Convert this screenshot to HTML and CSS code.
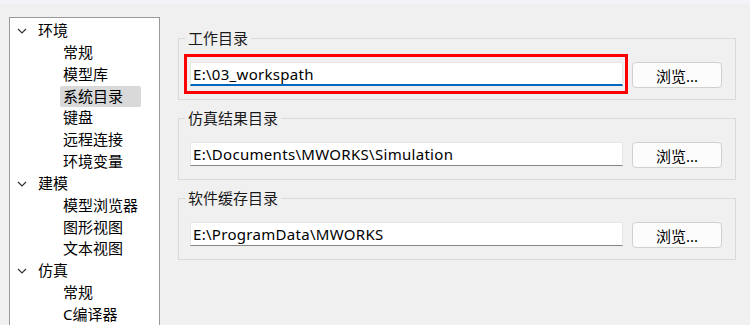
FILE: index.html
```html
<!DOCTYPE html>
<html lang="zh-CN">
<head>
    <meta charset="UTF-8">
    <title>选项 - 系统目录</title>
    <link rel="stylesheet" href="styles.css">
</head>
<body>
    <div class="title-strip"></div>

    <div class="settings">
        <ul class="tree">
            <li class="tree-group">
                <div class="tree-parent">
                    <svg class="chevron" viewBox="0 0 10 6"><path d="M1 1l4 4 4-4"/></svg>
                    <span>环境</span>
                </div>
                <ul class="tree-children">
                    <li><span>常规</span></li>
                    <li><span>模型库</span></li>
                    <li class="selected"><span>系统目录</span></li>
                    <li><span>键盘</span></li>
                    <li><span>远程连接</span></li>
                    <li><span>环境变量</span></li>
                </ul>
            </li>
            <li class="tree-group">
                <div class="tree-parent">
                    <svg class="chevron" viewBox="0 0 10 6"><path d="M1 1l4 4 4-4"/></svg>
                    <span>建模</span>
                </div>
                <ul class="tree-children">
                    <li><span>模型浏览器</span></li>
                    <li><span>图形视图</span></li>
                    <li><span>文本视图</span></li>
                </ul>
            </li>
            <li class="tree-group">
                <div class="tree-parent">
                    <svg class="chevron" viewBox="0 0 10 6"><path d="M1 1l4 4 4-4"/></svg>
                    <span>仿真</span>
                </div>
                <ul class="tree-children">
                    <li><span>常规</span></li>
                    <li><span>C编译器</span></li>
                </ul>
            </li>
        </ul>

        <div class="panel">
            <fieldset class="group">
                <legend>工作目录</legend>
                <div class="path-row">
                    <div class="mark">
                        <input class="path-input focused" type="text" value="E:\03_workspath">
                    </div>
                    <button class="btn">浏览...</button>
                </div>
            </fieldset>

            <fieldset class="group">
                <legend>仿真结果目录</legend>
                <div class="path-row">
                    <input class="path-input" type="text" value="E:\Documents\MWORKS\Simulation">
                    <button class="btn">浏览...</button>
                </div>
            </fieldset>

            <fieldset class="group">
                <legend>软件缓存目录</legend>
                <div class="path-row">
                    <input class="path-input" type="text" value="E:\ProgramData\MWORKS">
                    <button class="btn">浏览...</button>
                </div>
            </fieldset>
        </div>
    </div>
</body>
</html>
```

FILE: styles.css
```css
* {
    margin: 0;
    padding: 0;
    box-sizing: border-box;
}

body {
    font-family: 'Noto Sans', 'Noto Sans CJK SC', sans-serif;
    font-size: 15px;
    color: #000;
    background-color: #f0f0f0;
    height: 325px;
    overflow: hidden;
}

.title-strip {
    height: 4px;
    background-color: #f2f4fa;
}

.settings {
    display: flex;
    align-items: flex-start;
    padding-left: 9px;
}

/* left navigation tree */
.tree {
    list-style: none;
    width: 151px;
    height: 320px;
    margin-top: 13px;
    padding-top: 2px;
    background-color: #fff;
    border: 1px solid #999;
    border-bottom: none;
}

.tree ul {
    list-style: none;
}

.tree-parent,
.tree-children li {
    height: 21.85px;
    line-height: 21.85px;
    white-space: nowrap;
}

.tree-parent {
    display: flex;
    align-items: center;
    padding-left: 7px;
}

.chevron {
    width: 10px;
    height: 6px;
    margin-right: 11px;
    fill: none;
    stroke: #333;
    stroke-width: 1.2;
}

.tree-children li {
    padding-left: 50px;
}

.tree-children li span {
    display: inline-block;
    padding: 0 3px;
}

.tree-children li.selected span {
    width: 81px;
    background-color: #d9d9d9;
    border-radius: 2px;
}

/* right settings panel */
.panel {
    display: flex;
    flex-direction: column;
    gap: 8px;
    width: 558px;
    margin-left: 18px;
    margin-top: 24px;
}

.group {
    border: 1px solid #dadada;
    padding: 13px 13px 11px 11px;
}

.group legend {
    margin-left: -5px;
    padding: 0 3px;
    height: 21px;
    line-height: 21px;
    color: #1a1a1a;
}

.path-row {
    display: flex;
    align-items: flex-start;
    gap: 9px;
}

.path-input {
    flex: 1;
    min-width: 0;
    height: 24px;
    padding: 0 2px;
    font-family: inherit;
    font-size: 15px;
    letter-spacing: 0.3px;
    color: #000;
    background-color: #fff;
    border: 1px solid #e6e6e6;
    border-bottom: 1px solid #868686;
    outline: none;
}

.path-input.focused {
    width: 100%;
    border-bottom: 2px solid #0067c0;
}

/* red annotation frame round the edited path */
.mark {
    flex: 1;
    display: flex;
    margin: -8px -5px -8px -6px;
    padding: 5px 2px 5px 3px;
    border: 3px solid #f00;
}

.btn {
    flex: none;
    width: 90px;
    height: 26px;
    font-family: inherit;
    font-size: 15px;
    color: #000;
    background-color: #fcfcfc;
    border: 1px solid #d0d0d0;
    border-radius: 4px;
}
```
